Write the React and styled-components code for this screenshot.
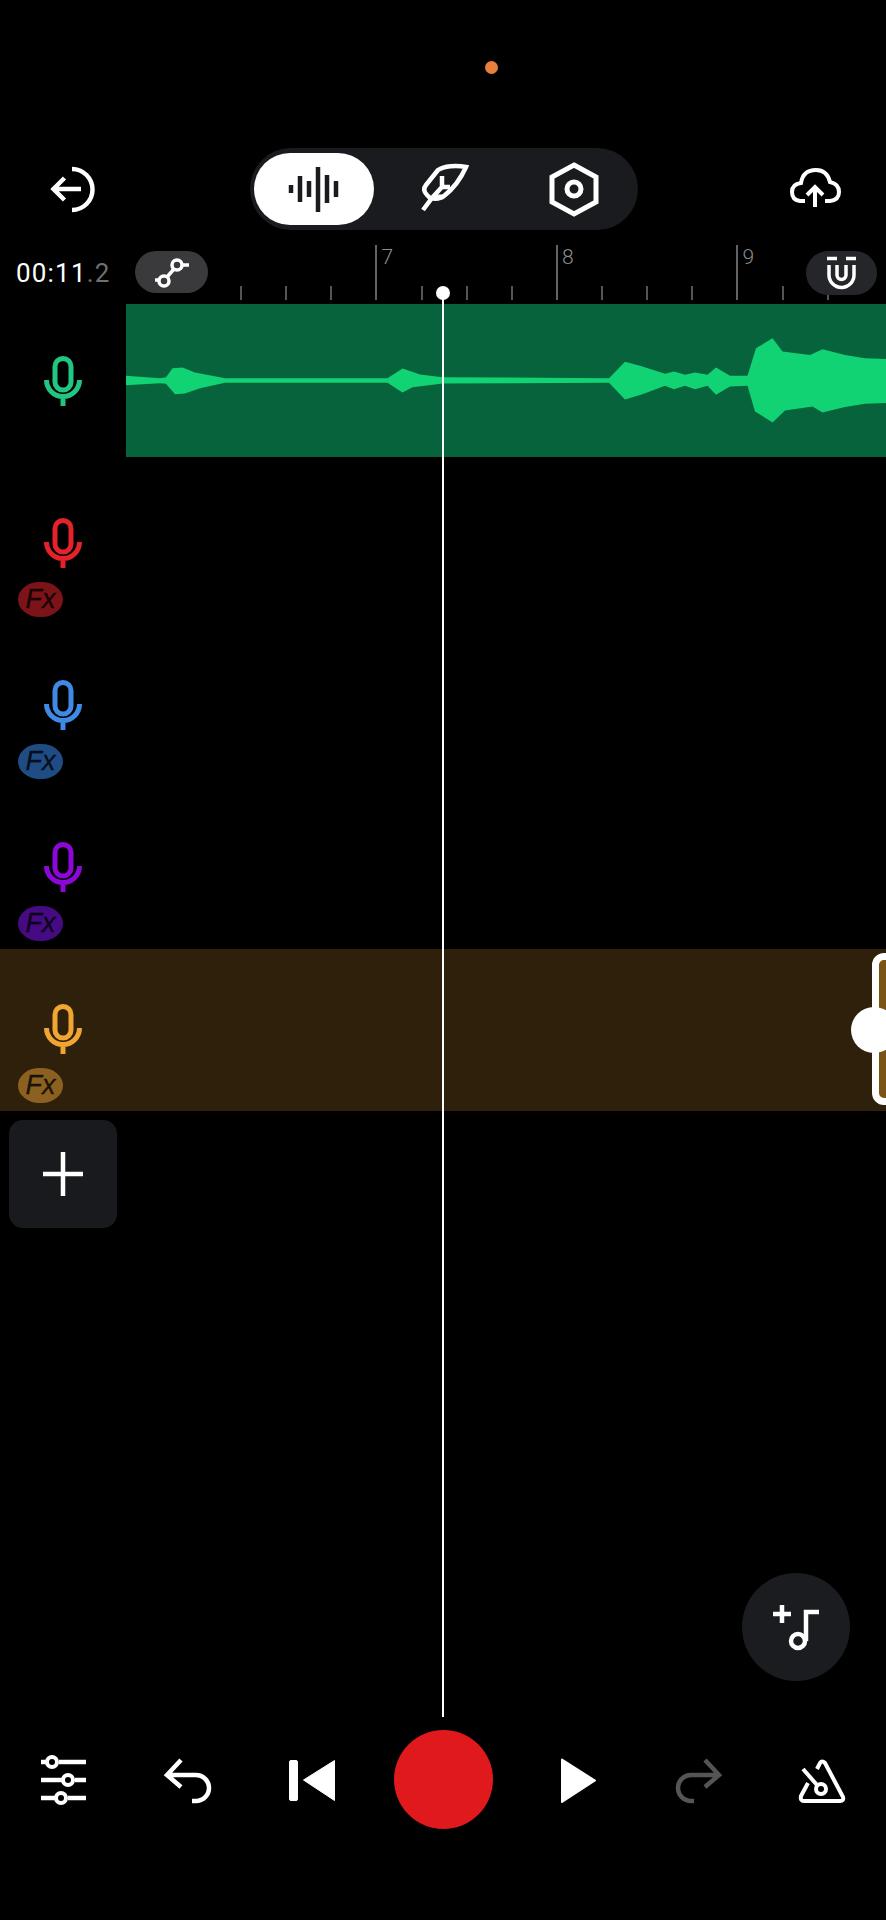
import React from 'react';
import styled, { createGlobalStyle } from 'styled-components';

const GlobalStyle = createGlobalStyle`
  html, body {
    margin: 0;
    padding: 0;
    background: #000;
  }
`;

const Screen = styled.div`
  position: relative;
  display: flex;
  flex-direction: column;
  width: 886px;
  height: 1920px;
  overflow: hidden;
  background: #000;
  font-family: Roboto, "Liberation Sans", sans-serif;
`;

const StatusArea = styled.div`
  height: 148px;
  padding: 61px 0 0 485px;
  box-sizing: border-box;
`;

const RecordingDot = styled.div`
  width: 13px;
  height: 13px;
  border-radius: 50%;
  background: #e97f3d;
`;

const Toolbar = styled.div`
  display: flex;
  align-items: center;
  justify-content: space-between;
  height: 82px;
  margin-bottom: 15px;
  padding: 0 43px 0 48px;
`;

const ModeSwitch = styled.div`
  display: grid;
  grid-template-columns: repeat(3, 120px);
  gap: 10px;
  padding: 5px 4px;
  border-radius: 41px;
  background: #1a1b1f;
`;

const ModeButton = styled.div`
  display: flex;
  align-items: center;
  justify-content: center;
  height: 72px;
  border-radius: 36px;
  background: ${({ $active }) => ($active ? '#fff' : 'transparent')};
`;

const RulerRow = styled.div`
  position: relative;
  display: flex;
  height: 56px;
  padding-left: 16px;
`;

const TimeLabel = styled.div`
  width: 119px;
  padding-top: 12px;
  font-size: 26px;
  letter-spacing: 1.2px;
  line-height: 32px;
  color: #fff;
  white-space: nowrap;
`;

const TimeFraction = styled.span`
  color: #6f6f6f;
`;

const ToolPill = styled.div`
  display: flex;
  align-items: center;
  justify-content: center;
  flex-shrink: 0;
  width: 73px;
  height: 42px;
  margin-top: 6px;
  border-radius: 21px;
  background: #3a3a3c;
`;

const SnapPill = styled(ToolPill)`
  position: absolute;
  top: 0;
  left: 806px;
  width: 71px;
  height: 44px;
  border-radius: 22px;
  background: #25262a;
`;

const Ruler = styled.div`
  display: flex;
  margin-left: 32px;
`;

const Tick = styled.div`
  flex-shrink: 0;
  align-self: flex-end;
  box-sizing: border-box;
  width: 45.125px;
  height: ${({ $major }) => ($major ? '55px' : '14px')};
  margin-bottom: 1px;
  padding-left: 4px;
  border-left: 2px solid ${({ $major }) => ($major ? '#636363' : '#555')};
  font-size: 21px;
  font-weight: 300;
  line-height: 24px;
  color: #8c8c8c;
`;

const Tracks = styled.div`
  display: flex;
  flex-direction: column;
`;

const TrackRow = styled.div`
  position: relative;
  display: flex;
  height: 162px;
  background: ${({ $selected }) => ($selected ? '#2e200b' : 'transparent')};
`;

const TrackHead = styled.div`
  display: flex;
  flex-direction: column;
  flex-shrink: 0;
  width: 126px;
  padding-top: 55px;
  box-sizing: border-box;
`;

const MicIcon = styled.svg`
  display: block;
  width: 38px;
  height: 50px;
  margin-left: 44px;
  fill: none;
  stroke: ${({ $color }) => $color};
  stroke-width: 5;
`;

const FxBadge = styled.div`
  width: 45px;
  height: 35px;
  margin: 14px 0 0 18px;
  border-radius: 22px / 18px;
  background: ${({ $color }) => $color};
  font-family: "Liberation Sans", sans-serif;
  font-size: 27px;
  font-style: italic;
  line-height: 35px;
  text-align: center;
  color: rgba(0, 0, 0, 0.8);
  -webkit-text-stroke: 0.3px rgba(0, 0, 0, 0.8);
`;

const Clip = styled.div`
  flex: 1;
  height: 153px;
  margin-top: 3px;
  background: #07633b;
`;

const ClipWave = styled.svg`
  display: block;
  width: 100%;
  height: 100%;
  fill: #11d373;
`;

const TrimHandle = styled.div`
  position: absolute;
  top: 4px;
  left: 872px;
  box-sizing: border-box;
  width: 40px;
  height: 152px;
  border: 7px solid #fff;
  border-radius: 12px;
  background: #7a5316;
`;

const TrimKnob = styled.div`
  position: absolute;
  top: 58px;
  left: 851px;
  width: 46px;
  height: 46px;
  border-radius: 50%;
  background: #fff;
`;

const AddTrack = styled.div`
  display: flex;
  align-items: center;
  justify-content: center;
  width: 108px;
  height: 108px;
  margin: 9px 0 0 9px;
  border-radius: 14px;
  background: #181a1d;
`;

const Playhead = styled.div`
  position: absolute;
  top: 293px;
  left: 442px;
  width: 2px;
  height: 1424px;
  background: #fff;

  &::before {
    content: '';
    position: absolute;
    top: -7px;
    left: -6px;
    width: 14px;
    height: 14px;
    border-radius: 50%;
    background: #fff;
  }
`;

const AddNoteButton = styled.div`
  position: absolute;
  top: 1573px;
  left: 742px;
  display: flex;
  align-items: center;
  justify-content: center;
  width: 108px;
  height: 108px;
  border-radius: 50%;
  background: #1a1c1f;
`;

const Transport = styled.div`
  display: flex;
  align-items: center;
  height: 99px;
  margin-top: auto;
  margin-bottom: 91px;
  padding-left: 38px;
`;

const TransportGroup = styled.div`
  display: flex;
  gap: ${({ $gap }) => $gap}px;
`;

const RecordButton = styled.div`
  flex-shrink: 0;
  width: 99px;
  height: 99px;
  margin: 0 58px 0 56px;
  border-radius: 50%;
  background: #e01a1c;
`;

const Icon = styled.svg`
  display: block;
  flex-shrink: 0;
  fill: none;
  stroke: ${({ $color }) => $color || '#fff'};
  stroke-width: ${({ $weight }) => $weight || 4.5};
`;

const waveTop = [
  [52, 228], [120, 235], [132, 232], [145, 205], [165, 203], [190, 218], [250, 235], [575, 235],
  [605, 206], [640, 224], [685, 232], [1018, 235], [1050, 186], [1080, 198], [1130, 222], [1148, 215],
  [1170, 225], [1190, 218], [1215, 225], [1232, 203], [1260, 228], [1295, 228], [1312, 145], [1345, 115],
  [1365, 155], [1420, 165], [1445, 148], [1490, 165], [1530, 175], [1572, 177],
];

const waveBottom = [
  [52, 256], [120, 250], [132, 252], [150, 283], [170, 281], [200, 265], [250, 249], [575, 249],
  [605, 278], [625, 262], [685, 251], [1018, 249], [1050, 299], [1085, 283], [1130, 258], [1148, 268],
  [1170, 258], [1190, 268], [1215, 258], [1232, 285], [1260, 260], [1295, 258], [1310, 335], [1345, 368],
  [1370, 332], [1425, 320], [1445, 338], [1490, 322], [1530, 312], [1572, 310],
];

const wavePoints = [...waveTop, ...[...waveBottom].reverse()].map((p) => p.join(',')).join(' ');

const tracks = [
  { color: '#22c683', clip: true },
  { color: '#e3222b', fx: '#7b1319' },
  { color: '#3f8ae4', fx: '#1f4c84' },
  { color: '#8c07d8', fx: '#460a82' },
  { color: '#f0a631', fx: '#8c6020', selected: true },
];

// ruler starts at x=240, a numbered tick every 4th one
const ticks = Array.from({ length: 14 }, (_, i) => ({
  major: (i - 3) % 4 === 0,
  label: (i - 3) % 4 === 0 ? 7 + (i - 3) / 4 : null,
}));

const Mic = ({ color }) => (
  <MicIcon $color={color} viewBox="0 0 38 50">
    <rect x="11" y="2.5" width="16" height="31.5" rx="8" />
    <path d="M2.5 24a16.5 16.5 0 0 0 33 0M19 41v9" />
  </MicIcon>
);

const App = () => (
  <Screen>
    <GlobalStyle />
    <StatusArea>
      <RecordingDot />
    </StatusArea>

    <Toolbar>
      <Icon width="50" height="50" viewBox="48 164 50 50">
        <path d="M72 169A20.5 20.5 0 0 1 72 210M81 189H54M64.5 178L53.5 189L64.5 200" />
      </Icon>
      <ModeSwitch>
        <ModeButton $active>
          <Icon width="54" height="50" viewBox="288 164 54 50" $color="#1a1b1f">
            <path d="M292 185v8M301 176v26M310 181v16M319 167v45M328 175v28M337 181v16" />
          </Icon>
        </ModeButton>
        <ModeButton>
          <Icon width="75" height="70" viewBox="0 0 75 70" $weight="4.5">
            <path d="M60 13C50 11 38 12 32 16L20 31Q16 36 21 41L24 44Q33 46 38 42Q52 31 60 13Z" />
            <path d="M17 56L26 44L36 33V22M36 33H44" />
            <path d="M28 42H39" strokeWidth="3" />
          </Icon>
        </ModeButton>
        <ModeButton>
          <Icon width="50" height="56" viewBox="548 161 50 56" $weight="5">
            <path d="M573 165L595 177V202L573 214L551 202V177Z" />
            <circle cx="573" cy="189" r="7" />
          </Icon>
        </ModeButton>
      </ModeSwitch>
      <Icon width="54" height="46" viewBox="788 166 54 46" $weight="4">
        <path d="M804 201H799Q791 200 791 192Q791 184 800 183Q802 170 815 170Q826 170 829 182Q838 184 838 192Q838 200 829 201H824" />
        <path d="M814 207V187M806 195L814 187L822 195" />
      </Icon>
    </Toolbar>

    <RulerRow>
      <TimeLabel>
        00:11<TimeFraction>.2</TimeFraction>
      </TimeLabel>
      <ToolPill>
        <Icon width="50" height="34" viewBox="0 0 50 34" $weight="3.5">
          <circle cx="30" cy="10" r="5" />
          <circle cx="17" cy="26" r="5" />
          <path d="M27 14L20 22M35 10H42M8 25H12" />
        </Icon>
      </ToolPill>
      <Ruler>
        {ticks.map((tick, i) => (
          <Tick key={i} $major={tick.major}>
            {tick.label}
          </Tick>
        ))}
      </Ruler>
      <SnapPill>
        <Icon width="34" height="36" viewBox="824 255 34 36" $weight="3.5">
          <path d="M826 258.500H836M845 258.500H855" />
          <path d="M828 265V275A12.500 12.500 0 0 0 853 275V265M836 265V275A4.500 4.500 0 0 0 845 275V265" />
        </Icon>
      </SnapPill>
    </RulerRow>

    <Tracks>
      {tracks.map((track) => (
        <TrackRow key={track.color} $selected={track.selected}>
          <TrackHead>
            <Mic color={track.color} />
            {track.fx && <FxBadge $color={track.fx}>Fx</FxBadge>}
          </TrackHead>
          {track.clip && (
            <Clip>
              <ClipWave viewBox="52 12 1520 460" preserveAspectRatio="none">
                <polygon points={wavePoints} />
              </ClipWave>
            </Clip>
          )}
          {track.selected && (
            <>
              <TrimHandle />
              <TrimKnob />
            </>
          )}
        </TrackRow>
      ))}
    </Tracks>

    <AddTrack>
      <Icon width="40" height="44" viewBox="0 0 40 44">
        <path d="M20 0V44M0 22H40" />
      </Icon>
    </AddTrack>

    <Transport>
      <TransportGroup $gap={75}>
        <Icon width="50" height="50" viewBox="38 1755 50 50">
          <path d="M41 1762H46M59 1762H86M41 1780H62M75 1780H86M41 1798H55M68 1798H86" />
          <circle cx="52" cy="1762" r="5" strokeWidth="4" />
          <circle cx="68" cy="1780" r="5" strokeWidth="4" />
          <circle cx="61" cy="1798" r="5" strokeWidth="4" />
        </Icon>
        <Icon width="50" height="50" viewBox="163 1755 50 50">
          <path d="M181 1760L167 1775L181 1787M168 1775H196A13 13 0 0 1 196 1801H192" />
        </Icon>
        <Icon width="50" height="50" viewBox="288 1755 50 50" $weight="1">
          <rect x="289.500" y="1760.500" width="8" height="40" rx="1.500" fill="#fff" />
          <path d="M303.500 1780L334.500 1760.500V1800.500Z" fill="#fff" strokeLinejoin="round" />
        </Icon>
      </TransportGroup>
      <RecordButton />
      <TransportGroup $gap={73}>
        <Icon width="50" height="50" viewBox="550 1755 50 50" $weight="2">
          <path d="M561 1759.500L594 1780.500L561 1802Z" fill="#fff" strokeLinejoin="round" />
        </Icon>
        <Icon width="50" height="50" viewBox="674 1755 50 50" $color="#555">
          <path d="M705 1760L719 1775L705 1787M718 1775H691A13 13 0 0 0 691 1801H694" />
        </Icon>
        <Icon width="50" height="50" viewBox="798 1755 50 50" $weight="4">
          <path d="M818 1769L821 1763Q823 1760 826 1763L844 1797Q845 1801 841 1801H805Q801 1801 802 1796L809 1783" />
          <path d="M804 1769L818 1785" />
          <circle cx="822" cy="1789" r="5" />
        </Icon>
      </TransportGroup>
    </Transport>

    <AddNoteButton>
      <Icon width="60" height="60" viewBox="766 1597 60 60">
        <path d="M773 1614H791M782 1605V1623" />
        <path d="M806 1641V1612H819" />
        <circle cx="798" cy="1641" r="7" />
      </Icon>
    </AddNoteButton>

    <Playhead />
  </Screen>
);

export default App;
